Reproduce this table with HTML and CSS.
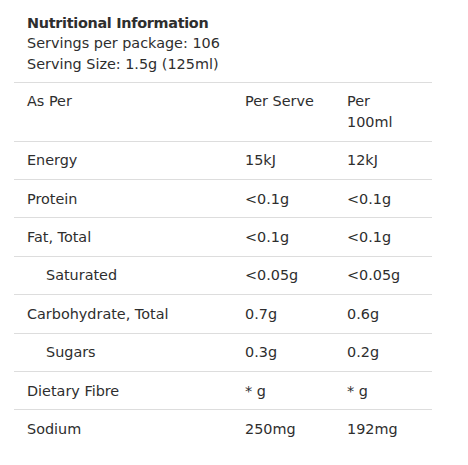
FILE: index.html
```html
<!DOCTYPE html>
<html>
<head>
<meta charset="utf-8">
<link rel="stylesheet" href="styles.css">
</head>
<body>
<div class="panel">
  <div class="intro">
    <div class="title">Nutritional Information</div>
    <div>Servings per package: 106</div>
    <div>Serving Size: 1.5g (125ml)</div>
  </div>
  <table class="facts">
    <colgroup>
      <col class="c1"><col class="c2"><col class="c3">
    </colgroup>
    <tr><td>As Per</td><td>Per Serve</td><td>Per<br>100ml</td></tr>
    <tr><td>Energy</td><td>15kJ</td><td>12kJ</td></tr>
    <tr><td>Protein</td><td>&lt;0.1g</td><td>&lt;0.1g</td></tr>
    <tr><td>Fat, Total</td><td>&lt;0.1g</td><td>&lt;0.1g</td></tr>
    <tr><td class="sub">Saturated</td><td>&lt;0.05g</td><td>&lt;0.05g</td></tr>
    <tr><td>Carbohydrate, Total</td><td>0.7g</td><td>0.6g</td></tr>
    <tr><td class="sub">Sugars</td><td>0.3g</td><td>0.2g</td></tr>
    <tr><td>Dietary Fibre</td><td>* g</td><td>* g</td></tr>
    <tr class="last"><td>Sodium</td><td>250mg</td><td>192mg</td></tr>
  </table>
</div>
</body>
</html>
```
FILE: styles.css
```css
html, body {
  margin: 0;
  padding: 0;
  background: #fff;
}
body {
  font-family: "DejaVu Sans", "Open Sans", sans-serif;
  font-size: 14.4px;
  line-height: 20.3px;
  color: #2e2e2e;
}
.panel {
  width: 418px;
  margin-left: 14px;
}
.intro {
  padding: 13px 13px 8px;
  border-bottom: 1px solid #ddd;
}
.title {
  font-weight: 700;
  letter-spacing: -0.3px;
}
.facts {
  width: 100%;
  border-collapse: collapse;
  table-layout: fixed;
}
.c1 { width: 218px; }
.c2 { width: 102px; }
.c3 { width: 98px; }
.facts td {
  padding: 8.6px 13px 8.5px;
  vertical-align: top;
  border-bottom: 1px solid #ddd;
}
.facts tr.last td {
  border-bottom: none;
}
.facts td.sub {
  padding-left: 32px;
}
```
